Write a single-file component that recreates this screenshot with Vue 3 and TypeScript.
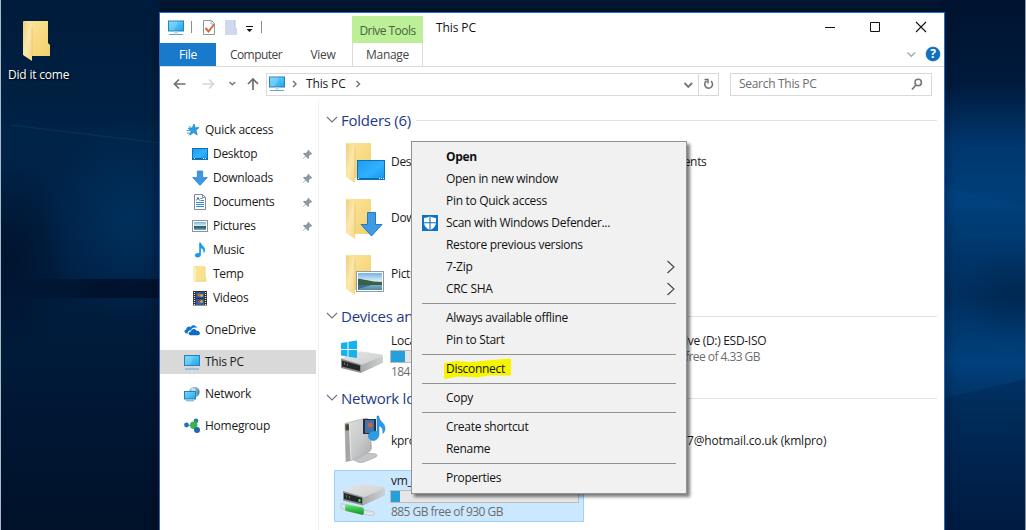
<script setup lang="ts">
interface NavItem { label: string; icon: string; pinned?: boolean; root?: boolean; active?: boolean; gap?: boolean }
interface MenuItem { label?: string; icon?: string; bold?: boolean; sub?: boolean; mark?: boolean; sep?: boolean }

const nav: NavItem[] = [
  { label: 'Quick access', icon: 'star', root: true },
  { label: 'Desktop', icon: 'desktop', pinned: true },
  { label: 'Downloads', icon: 'arrow', pinned: true },
  { label: 'Documents', icon: 'doc', pinned: true },
  { label: 'Pictures', icon: 'picture', pinned: true },
  { label: 'Music', icon: 'music' },
  { label: 'Temp', icon: 'minifolder' },
  { label: 'Videos', icon: 'film' },
  { label: 'OneDrive', icon: 'cloud', root: true, gap: true },
  { label: 'This PC', icon: 'pc', root: true, gap: true, active: true },
  { label: 'Network', icon: 'network', root: true, gap: true },
  { label: 'Homegroup', icon: 'homegroup', root: true, gap: true },
]

const menu: MenuItem[] = [
  { label: 'Open', bold: true },
  { label: 'Open in new window' },
  { label: 'Pin to Quick access' },
  { label: 'Scan with Windows Defender...', icon: 'shield' },
  { label: 'Restore previous versions' },
  { label: '7-Zip', sub: true },
  { label: 'CRC SHA', sub: true },
  { sep: true },
  { label: 'Always available offline' },
  { label: 'Pin to Start' },
  { sep: true },
  { label: 'Disconnect', mark: true },
  { sep: true },
  { label: 'Copy' },
  { sep: true },
  { label: 'Create shortcut' },
  { label: 'Rename' },
  { sep: true },
  { label: 'Properties' },
]

const folders = [
  { label: 'Desk', icon: 'f-desktop' },
  { label: 'Down', icon: 'f-downloads' },
  { label: 'Pictu', icon: 'f-pictures' },
]
</script>

<template>
  <svg class="defs" width="0" height="0">
    <defs>
      <linearGradient id="gFold" x1="0" y1="0" x2="1" y2="1">
        <stop offset="0" stop-color="#fce69c" /><stop offset="1" stop-color="#f2cf6c" />
      </linearGradient>
      <linearGradient id="gFlap" x1="0" y1="0" x2="1" y2="1">
        <stop offset="0" stop-color="#efcf77" /><stop offset=".5" stop-color="#fbe8ad" /><stop offset="1" stop-color="#f3d78a" />
      </linearGradient>
      <linearGradient id="gBlue" x1="0" y1="0" x2="1" y2="1">
        <stop offset="0" stop-color="#1f9cf0" /><stop offset=".55" stop-color="#31b0fc" /><stop offset="1" stop-color="#1295ee" />
      </linearGradient>
      <linearGradient id="gScreen" x1="0" y1="0" x2="1" y2="1">
        <stop offset="0" stop-color="#7fd4fa" /><stop offset=".5" stop-color="#4cc0f7" /><stop offset="1" stop-color="#1fa3ec" />
      </linearGradient>
      <linearGradient id="gMetal" x1="0" y1="0" x2="1" y2="1">
        <stop offset="0" stop-color="#e6e6e6" /><stop offset="1" stop-color="#cccdce" />
      </linearGradient>
      <linearGradient id="gSide" x1="0" y1="0" x2="1" y2="0">
        <stop offset="0" stop-color="#a9aaab" /><stop offset="1" stop-color="#cfd0d1" />
      </linearGradient>
      <linearGradient id="gNas" x1="0" y1="0" x2="1" y2="1">
        <stop offset="0" stop-color="#dfe0e1" /><stop offset=".55" stop-color="#c8c9ca" /><stop offset="1" stop-color="#a6a8aa" />
      </linearGradient>
      <linearGradient id="gGreen" x1="0" y1="0" x2="0" y2="1">
        <stop offset="0" stop-color="#8be893" /><stop offset=".35" stop-color="#45cb55" /><stop offset="1" stop-color="#168c29" />
      </linearGradient>
      <linearGradient id="gSky" x1="0" y1="0" x2="0" y2="1">
        <stop offset="0" stop-color="#71b8e8" /><stop offset=".5" stop-color="#dceef3" /><stop offset=".52" stop-color="#3c6b4b" /><stop offset=".7" stop-color="#2f6277" /><stop offset="1" stop-color="#78b4cc" />
      </linearGradient>
      <linearGradient id="gPhoto" x1="0" y1="0" x2="0" y2="1">
        <stop offset="0" stop-color="#6fb4e6" /><stop offset=".45" stop-color="#d5ebf5" /><stop offset=".6" stop-color="#8fbdd4" /><stop offset="1" stop-color="#4d86a8" />
      </linearGradient>
    </defs>
    <symbol id="folder" viewBox="0 0 40 42">
      <path d="M1 0h24v22l2 2v11H8z" fill="url(#gFold)" />
      <path d="M0 0l9 4v36l-9-6z" fill="url(#gFlap)" />
      <path d="M9 5v30" stroke="#e2bd5a" stroke-width=".6" />
    </symbol>
    <symbol id="pc" viewBox="0 0 16 16">
      <rect x=".5" y="1.5" width="15" height="10" fill="url(#gScreen)" stroke="#2881b8" />
      <path d="M1 2h9L6 11H1z" fill="#9de0fb" opacity=".3" />
      <path d="M6 12h4v2H6z" fill="#c7d9e4" /><path d="M1 15h14" stroke="#6ba4c6" />
    </symbol>
    <symbol id="star" viewBox="0 0 16 16">
      <path d="M10 2l1.200 3.800 3.800-.2-3 2.700 1.200 4.600-3.600-2.300L6 13l1.100-4.200L4.200 6.300l4-.4z" fill="#2ba0e3" stroke="#147cbb" stroke-width=".7" />
      <path d="M2.500 8.500h3.500M3 11h3M4.500 13l2-1.200M5 4.500l2 .8" stroke="#3aa5df" stroke-width="1" />
    </symbol>
    <symbol id="desktop" viewBox="0 0 16 16">
      <rect x=".5" y="2.5" width="15" height="11" fill="url(#gBlue)" stroke="#0b72bd" />
      <path d="M1 12.5h14" stroke="#0764ab" /><path d="M2 12.5h1M11 12.5h1M13 12.5h1" stroke="#fff" />
    </symbol>
    <symbol id="arrow" viewBox="0 0 16 16">
      <path d="M5.300 1h5.400v6.600h4.600L8 15.400.7 7.600h4.600z" fill="#3c98e2" stroke="#2a78bd" stroke-width=".7" />
    </symbol>
    <symbol id="doc" viewBox="0 0 16 16">
      <path d="M2.500 .5h8l3 3v12h-11z" fill="#fff" stroke="#808a90" />
      <path d="M10.500.5v3h3" fill="none" stroke="#808a90" />
      <path d="M4 8.500h8M4 10.500h8M4 12.500h8M8.500 6.500H12M8.500 4.500h2" stroke="#3388bd" />
      <path d="M4.500 6.500l1.500-3 1.500 3" stroke="#26709e" fill="none" />
    </symbol>
    <symbol id="picture" viewBox="0 0 16 16">
      <rect x=".5" y="2.500" width="15" height="11" fill="#fff" stroke="#8b9499" />
      <rect x="2" y="4" width="12" height="8" fill="url(#gSky)" />
    </symbol>
    <symbol id="music" viewBox="0 0 16 16">
      <path d="M7.200 .5h1.600c.3 3 4.600 4 4.200 8-.1 1.300-.7 2.300-1.500 3 .6-3-.7-4.600-2.600-5.200v6.500c0 1.700-1.500 2.700-3.300 2.700-1.700 0-2.800-.9-2.800-2.200 0-1.600 1.700-2.600 4.400-2.300z" fill="#169de9" />
    </symbol>
    <symbol id="minifolder" viewBox="0 0 16 16">
      <path d="M2 .8h11v10l1 1.200v3.200H2z" fill="#fbe28f" stroke="#e5c45f" stroke-width=".6" /><path d="M2 1l2 1v14l-2-1z" fill="#fff0ba" />
    </symbol>
    <symbol id="film" viewBox="0 0 16 16">
      <path d="M1 1h14v14.500H1z" fill="#2c2f33" />
      <path d="M2.500 2v13M13.500 2v13" stroke="#e8e8e8" stroke-width="1.300" stroke-dasharray="1 1" />
      <path d="M4 2h8v6H4z" fill="#2557a5" /><path d="M4 9h8v6H4z" fill="#2b5c9c" />
      <circle cx="7" cy="5" r="1.700" fill="#e15c34" /><circle cx="9.600" cy="5.500" r="1.500" fill="#cfb730" />
      <circle cx="7" cy="12" r="1.500" fill="#9a4c85" /><circle cx="9.500" cy="11.500" r="1.500" fill="#d5a43e" />
    </symbol>
    <symbol id="cloud" viewBox="0 0 16 16">
      <path d="M3 11.600C0 11.500-.5 8 2.200 7.400 2.300 4.700 5 3.600 6.800 5 8 2.600 12 2.500 13 6 9.800 4.600 7.300 6.500 7 8.200 4.800 8 3.400 9.600 4 11.600z" fill="#1376cf" />
      <path d="M6.200 13.200c-2.200-.3-2-3.600.7-3.700C7.300 6.600 11 6 12.500 8.700c3.800-.6 4.600 4.200 1.500 4.500z" fill="#0a6bc8" />
    </symbol>
    <symbol id="network" viewBox="0 0 16 16">
      <circle cx="10.500" cy="6" r="5.300" fill="#82abc5" /><path d="M7 3c3-3 5-1 4.500 1.500S7 7 7 3z" fill="#c8dce7" /><path d="M14 3c2 3 1 5-1 7z" fill="#4682ab" />
      <rect x=".5" y="5.500" width="11" height="7.500" fill="url(#gScreen)" stroke="#2980b5" /><path d="M2 14.800h8" stroke="#5e9ec5" />
    </symbol>
    <symbol id="homegroup" viewBox="0 0 16 16">
      <path d="M3 7l8 1 2-5M10 8l3 4" stroke="#4a9ac8" stroke-width="1.200" fill="none" />
      <circle cx="2.500" cy="7" r="2.400" fill="#236fbd" /><circle cx="12" cy="2.800" r="2.400" fill="#2f7f9f" /><circle cx="9.700" cy="7.300" r="3.700" fill="#39b54a" /><circle cx="13" cy="12" r="3" fill="#1f68b0" />
    </symbol>
    <symbol id="pin" viewBox="0 0 12 12">
      <path d="M6.800.8l4.400 4.400-.8.8-.9-.3-2 2.200.2 2-1 1L4 8.100.8 11.200.6 11l3-3.300L1.100 5.200l1-1 2.100.2 2-2-.3-.8z" fill="#8e999f" />
    </symbol>
    <symbol id="shield" viewBox="0 0 16 16">
      <rect width="16" height="16" fill="#0f72c4" />
      <path d="M8 1.200c2 1.300 4 1.700 6 1.700v4.600c0 3.400-2.300 6-6 7.500-3.700-1.500-6-4.100-6-7.500V2.900c2 0 4-.4 6-1.700z" fill="#fff" />
      <path d="M8 1v14M2 7.700h12" stroke="#0f72c4" stroke-width="1.100" />
    </symbol>
    <symbol id="f-desktop" viewBox="0 0 42 42">
      <use href="#folder" x="0" y="0" width="40" height="42" />
      <rect x="11.500" y="17.500" width="27" height="19" fill="url(#gBlue)" stroke="#0c6fba" />
      <path d="M12 35.500h26" stroke="#0b6cb6" /><path d="M12 35.500h1M33 35.500h1M35 35.500h1M37 35.500h1" stroke="#fff" />
    </symbol>
    <symbol id="f-downloads" viewBox="0 0 42 42">
      <use href="#folder" x="0" y="0" width="40" height="42" />
      <path d="M21.500 13.500h8v12h6.500L25.500 37 15 25.500h6.500z" fill="#3e9be4" stroke="#2878be" />
    </symbol>
    <symbol id="f-pictures" viewBox="0 0 42 42">
      <use href="#folder" x="0" y="0" width="40" height="42" />
      <rect x="10.500" y="16.500" width="27" height="20" fill="#fff" stroke="#929ba0" />
      <rect x="12" y="18" width="24" height="17" fill="url(#gPhoto)" />
      <path d="M12 24c3-1 5 1 8 1 5 1 9 2 16 2v3H12z" fill="#386248" /><path d="M12 30h14l-14 4z" fill="#2b5573" opacity=".7" />
    </symbol>
    <symbol id="drive" viewBox="0 0 46 24">
      <path d="M1 7.500L17 1.200q2.500-1 5-.6l20 3q1.600.6 0 1.600L21 14z" fill="url(#gMetal)" />
      <path d="M21 14l22-9.300v7L21 22z" fill="url(#gSide)" />
      <path d="M1 7.500L21 13.500V22L1 17z" fill="#8a8c8d" />
      <path d="M2 9.500l18 5v5.500L2 15.500z" fill="#242729" />
      <path d="M4.500 11.500v2.500M7.500 12.500v2.500" stroke="#666" />
    </symbol>
  </svg>

  <div class="desk">
    <svg class="wall" width="1026" height="530" viewBox="0 0 1026 530" preserveAspectRatio="none">
      <defs>
        <linearGradient id="wl" x1="0" y1="0" x2="0" y2="1">
          <stop offset="0" stop-color="#001b3c" /><stop offset=".22" stop-color="#002143" /><stop offset=".25" stop-color="#002448" /><stop offset=".5" stop-color="#001f42" /><stop offset=".65" stop-color="#001b3b" /><stop offset=".82" stop-color="#001632" /><stop offset="1" stop-color="#001129" />
        </linearGradient>
        <linearGradient id="wr" x1="0" y1="0" x2="0" y2="1">
          <stop offset="0" stop-color="#001330" /><stop offset=".16" stop-color="#001b3d" /><stop offset=".27" stop-color="#00366d" /><stop offset=".37" stop-color="#003f7a" /><stop offset=".48" stop-color="#003365" /><stop offset=".56" stop-color="#003060" /><stop offset=".68" stop-color="#00407c" /><stop offset=".76" stop-color="#003364" /><stop offset="1" stop-color="#001a3e" />
        </linearGradient>
        <radialGradient id="glow"><stop offset="0" stop-color="#003668" stop-opacity=".7" /><stop offset="1" stop-color="#003668" stop-opacity="0" /></radialGradient>
        <radialGradient id="dark"><stop offset="0" stop-color="#000c22" stop-opacity=".6" /><stop offset="1" stop-color="#000c22" stop-opacity="0" /></radialGradient>
        <linearGradient id="band"><stop offset=".1" stop-color="#000d24" stop-opacity="0" /><stop offset=".6" stop-color="#000d24" stop-opacity=".75" /></linearGradient>
        <linearGradient id="beam" x1="0" y1="0" x2="0" y2="1"><stop offset="0" stop-color="#01498a" stop-opacity=".3" /><stop offset="1" stop-color="#01498a" stop-opacity="0" /></linearGradient>
      </defs>
      <rect width="600" height="530" fill="url(#wl)" />
      <rect x="600" width="426" height="530" fill="url(#wr)" />
      <rect x="160" width="780" height="13" fill="#001632" />
      <ellipse cx="130" cy="220" rx="90" ry="100" fill="url(#glow)" />
      <ellipse cx="10" cy="260" rx="60" ry="100" fill="url(#dark)" />
      <rect x="0" y="279" width="160" height="19" fill="url(#band)" />
      <path d="M10 125L160 143" stroke="#1a4a70" stroke-width="1" opacity=".4" />
      <path d="M945 188L1026 206V290H945z" fill="url(#beam)" />
      <path d="M945 398L1026 379V530H945z" fill="#001f48" opacity=".3" />
      <ellipse cx="1015" cy="295" rx="60" ry="45" fill="url(#dark)" opacity=".4" />
      <rect width="1" height="530" fill="#a9bac8" /><rect x="1025" width="1" height="530" fill="#8997a8" />
    </svg>

    <div class="shortcut">
      <svg width="40" height="42"><use href="#folder" width="40" height="42" /></svg>
      <span>Did it come</span>
    </div>

    <section class="window">
      <header class="titlebar">
        <div class="qat">
          <svg width="100" height="20" viewBox="0 0 100 20">
            <use href="#pc" x="0" y="0" width="16" height="17" />
            <path d="M23.500 2v12M93.500 2v12" stroke="#8d8d8d" />
            <path d="M35.500 1.500h8l3 3v11h-11z" fill="#fff" stroke="#8d989f" /><path d="M43 2v3h3" fill="none" stroke="#a9b2b6" />
            <path d="M37.500 9l3 3.500 5.500-7" fill="none" stroke="#d8643a" stroke-width="2" />
            <path d="M57 1h10v9h2v6H57z" fill="#ced9ee" /><path d="M67 1v9h2" fill="none" stroke="#b7c3d9" />
            <path d="M78 7.500h7" stroke="#111" /><path d="M78.500 10h6l-3 3z" fill="#111" />
          </svg>
        </div>
        <div class="drive-tools">Drive Tools</div>
        <div class="title">This PC</div>
        <svg class="winbtns" width="106" height="14" viewBox="0 0 106 14">
          <path d="M0 7.500h10M45.500 2.500h9v9h-9z" fill="none" stroke="#111" />
          <path d="M91 2l10 10M101 2L91 12" stroke="#111" stroke-width="1.100" />
        </svg>
      </header>
      <nav class="tabs">
        <span class="tab file">File</span>
        <span class="tab computer">Computer</span>
        <span class="tab view">View</span>
        <span class="tab manage">Manage</span>
        <svg class="help" width="34" height="16" viewBox="0 0 34 16">
          <path d="M1.500 5.500l3.800 3.800L9.100 5.500" fill="none" stroke="#9ba9b3" stroke-width="1.300" />
          <circle cx="27" cy="7" r="7" fill="#0f70c2" stroke="#0860ab" stroke-width=".6" />
          <text x="27" y="11.300" text-anchor="middle" class="q">?</text>
        </svg>
      </nav>
      <div class="address">
        <svg class="arrows" width="88" height="20" viewBox="0 0 88 20">
          <path d="M12.500 10H1.500M6 5.500L1.500 10 6 14.500" fill="none" stroke="#6f6f6f" stroke-width="1.700" />
          <path d="M29.500 10H40.500M36 5.500l4.500 4.500L36 14.500" fill="none" stroke="#d4d4d4" stroke-width="1.500" />
          <path d="M56.500 8l2.800 2.800L62.100 8" fill="none" stroke="#777" stroke-width="1.500" />
          <path d="M80 16V5M75 10L80 5l5 5" fill="none" stroke="#6f6f6f" stroke-width="1.700" />
        </svg>
        <div class="path">
          <svg width="34" height="20" viewBox="0 0 34 20"><use href="#pc" x="2" y="1" width="16" height="17" /><path d="M26 7l3 3-3 3" fill="none" stroke="#777" stroke-width="1.500" /></svg>
          <span class="crumb">This PC</span>
          <svg width="8" height="20" viewBox="0 0 8 20"><path d="M1.500 7l3 3-3 3" fill="none" stroke="#777" stroke-width="1.500" /></svg>
          <svg class="drop" width="15" height="20" viewBox="0 0 15 20"><path d="M1.500 9L5.300 12.800 9.100 9" fill="none" stroke="#777" stroke-width="1.900" /></svg>
          <span class="refresh"><svg width="14" height="16" viewBox="0 0 14 16"><path d="M9 5.200a3.900 3.900 0 1 1-4.500-.2" fill="none" stroke="#6f6f6f" stroke-width="1.500" /><path d="M2.500 3.500H6v4" fill="none" stroke="#6f6f6f" stroke-width="1.500" /></svg></span>
        </div>
        <div class="search">
          <span>Search This PC</span>
          <svg width="14" height="14" viewBox="0 0 14 14"><circle cx="8.200" cy="5.500" r="3.200" fill="none" stroke="#777" stroke-width="1.600" /><path d="M6 8L2 12.500" stroke="#777" stroke-width="1.800" /></svg>
        </div>
      </div>

      <div class="body">
        <aside class="side">
          <div v-for="n in nav" :key="n.label" class="row" :class="{ root: n.root, gap: n.gap, active: n.active }">
            <svg width="16" height="16"><use :href="'#' + n.icon" width="16" height="16" /></svg>
            <span>{{ n.label }}</span>
            <svg v-if="n.pinned" class="pin" width="11" height="11"><use href="#pin" width="11" height="11" /></svg>
          </div>
        </aside>

        <main class="content">
          <h2><svg width="12" height="8" viewBox="0 0 12 8"><path d="M1 1l5 5 5-5" fill="none" stroke="#6b7482" stroke-width="1.100" /></svg><span>Folders (6)</span><i></i></h2>
          <div class="folders">
            <div v-for="(f, i) in folders" :key="f.label" class="line">
              <div class="tile"><svg class="ico" width="42" height="42"><use :href="'#' + f.icon" width="42" height="42" /></svg><span>{{ f.label }}</span></div>
              <div v-if="i === 0" class="far">Documents</div>
            </div>
          </div>

          <h2 class="h-dev"><svg width="12" height="8" viewBox="0 0 12 8"><path d="M1 1l5 5 5-5" fill="none" stroke="#6b7482" stroke-width="1.100" /></svg><span>Devices and</span><i></i></h2>
          <div class="line drives">
            <div class="tile drive">
              <svg class="ico" width="46" height="36" viewBox="0 0 46 36">
                <use href="#drive" x="0" y="13" width="46" height="24" />
                <path d="M1 5l6.500-1v7H1zM8.500 3.800L17 2.500V11H8.500zM1 12h6.500v6.500L1 17.600zM8.500 12H17v8l-8.500-1.300z" fill="#15b3ee" />
              </svg>
              <div class="info"><span>Local</span><div class="bar"><b class="c"></b></div><em>184 G</em></div>
            </div>
            <div class="far dvd"><span>Drive (D:) ESD-ISO</span><em>free of 4.33 GB</em></div>
          </div>

          <h2 class="h-net"><svg width="12" height="8" viewBox="0 0 12 8"><path d="M1 1l5 5 5-5" fill="none" stroke="#6b7482" stroke-width="1.100" /></svg><span>Network loc</span><i></i></h2>
          <div class="line media">
            <div class="tile">
              <svg class="ico" width="44" height="50" viewBox="0 0 44 50">
                <path d="M12 44l14-7 8 1q2 1 0 3l-12 5q-3 1-6 0z" fill="#c3c5c6" stroke="#8f9192" stroke-width=".5" />
                <path d="M3 7.500L24 2q2.500 0 3 2.500l2.500 27q0 3-3 4.500L11 44l-7 1.500z" fill="url(#gNas)" stroke="#a1a3a5" stroke-width=".6" />
                <path d="M3 7.500l4-.5 2 37.500-5 1z" fill="#a3a5a7" /><path d="M3.300 8.500l3.700-.3.300 6-3.700.3z" fill="#45482f" />
                <path d="M7.300 7L9 44" stroke="#f1f1f1" stroke-width=".8" />
                <rect x="21" y="3" width="13" height="15" fill="#2a2e37" /><rect x="23" y="4" width="9" height="13" fill="#3f74af" /><circle cx="28" cy="9" r="2.500" fill="#c4683e" />
                <path d="M35 0h1.800c.5 6 6.700 7 6.200 13-.2 2-1 3.500-2 4.500.2-4-1-6.500-4-8V18c0 4-3 6.500-5.500 6.500-3 0-5-1.700-5-4.500 0-3.500 3.500-6 8.500-4.500z" fill="#2c9be8" stroke="#1878c4" stroke-width=".5" />
              </svg>
              <span>kpro</span>
            </div>
            <div class="far mail">7@hotmail.co.uk (kmlpro)</div>
          </div>
          <div class="line">
            <div class="tile selected">
              <svg class="ico" width="46" height="34" viewBox="0 0 46 34">
                <use href="#drive" x="2" y="4.500" width="46" height="24" />
                <path d="M19.500 20v3" stroke="#40df4a" stroke-width="2" />
                <path d="M1 24.500l5 1v6l-5-2.500zM23 31l7 1 4 1v3l-4 .5-7-1.500z" fill="#dfe5e6" stroke="#a1adb0" stroke-width=".5" />
                <path d="M6 25l17 3.500q2 3 0 7.500L6 32q-2-3.500 0-7z" fill="url(#gGreen)" />
              </svg>
              <div class="info"><span>vm_s</span><div class="bar"><b class="v"></b></div><em>885 GB free of 930 GB</em></div>
            </div>
          </div>
        </main>
      </div>
    </section>

    <div class="menu">
      <template v-for="(m, i) in menu" :key="i">
        <div v-if="m.sep" class="sep"></div>
        <div v-else class="item" :class="{ bold: m.bold }">
          <svg class="mi" width="16" height="16"><use v-if="m.icon" :href="'#' + m.icon" width="16" height="16" /></svg>
          <span class="lbl">
            <svg v-if="m.mark" class="hl" width="70" height="22" viewBox="0 0 70 22"><path d="M2 5L14 3l14 1L69 .5v17l-22 0-12 2-18-1-15 2.500z" fill="#f6f500" /></svg>
            <span>{{ m.label }}</span>
          </span>
          <svg v-if="m.sub" class="sub" width="10" height="14" viewBox="0 0 10 14"><path d="M1.500 1l6.500 6-6.500 6" fill="none" stroke="#4a4038" stroke-width="1.100" /></svg>
        </div>
      </template>
    </div>
  </div>
</template>

<style>
body { margin: 0; overflow: hidden; }
</style>

<style scoped>
.defs { position: absolute; }
svg { display: block; flex: none; overflow: visible; }
.desk { position: relative; width: 1026px; height: 530px; overflow: hidden; font: 12px/16px "Open Sans", "Noto Sans", sans-serif; letter-spacing: -0.3px; color: #1a1a1a; white-space: nowrap; }
.wall { position: absolute; left: 0; top: 0; }
.shortcut { position: absolute; left: 0; top: 21px; width: 78px; display: flex; flex-direction: column; color: #fff; letter-spacing: -0.2px; text-shadow: 1px 1px 2px #000; }
.shortcut svg { margin-left: 23px; }
.shortcut span { margin: 4px 0 0 8px; }
.window { position: absolute; box-sizing: border-box; left: 159px; top: 12px; width: 786px; height: 519px; border: 1px solid #1b6fc2; background: #fff; display: flex; flex-direction: column; box-shadow: 0 2px 10px rgba(0, 0, 10, .5); }
.titlebar { height: 30px; display: flex; }
.qat { width: 184px; padding: 6px 0 0 8px; }
.drive-tools { width: 71px; height: 27px; margin-top: 3px; background: #bdee98; color: #45663c; text-align: center; line-height: 29px; letter-spacing: -0.55px; }
.title { margin-left: 13px; line-height: 30px; color: #111; letter-spacing: -0.1px; }
.winbtns { margin: 7px 13px 0 auto; }
.tabs { height: 23px; display: flex; border-bottom: 1px solid #dadbdc; line-height: 24px; color: #444; }
.tab { text-align: center; }
.file { width: 56px; background: #1979ca; color: #fff; }
.computer { width: 80px; letter-spacing: -0.55px; }
.view { width: 54px; margin-right: 2px; }
.manage { width: 69px; border: solid #dcdcdc; border-width: 0 1px; }
.help { margin: 4px 4px 0 auto; }
.q { font: bold 12px "Open Sans", sans-serif; fill: #fff; }
.address { height: 34px; display: flex; align-items: center; box-sizing: border-box; }
.arrows { margin-left: 13px; }
.path { box-sizing: border-box; height: 23px; width: 453px; margin-left: 5px; border: 1px solid #d9d9d9; display: flex; align-items: center; }
.crumb { margin: 0 9px 0 5px; letter-spacing: -0.15px; }
.drop { margin-left: auto; }
.refresh { width: 19px; height: 21px; border-left: 1px solid #d9d9d9; display: flex; align-items: center; justify-content: center; }
.search { box-sizing: border-box; width: 202px; height: 23px; margin-left: 11px; padding: 0 7px 0 8px; border: 1px solid #d9d9d9; display: flex; align-items: center; justify-content: space-between; color: #6d6d6d; }
.search span { letter-spacing: -0.3px; }
.body { flex: 1; display: flex; min-height: 0; }
.side { box-sizing: border-box; width: 159px; padding-top: 17px; border-right: 1px solid #f2f2f2; }
.row { box-sizing: border-box; width: 156px; height: 24px; padding-left: 32px; display: flex; align-items: center; }
.row span { margin-left: 5px; }
.row.root { padding-left: 24px; letter-spacing: -0.25px; }
.row.gap { margin-top: 8px; }
.row.active { background: #d9d9d9; }
.pin { margin: 0 3px 0 auto; }
.content { flex: 1; padding-left: 7px; }
h2 { margin: 0; height: 20px; padding-top: 9px; display: flex; align-items: center; font-size: 15px; line-height: 20px; font-weight: 400; letter-spacing: -0.25px; color: #1e3a86; }
h2 span { margin: 0 5px 0 3px; }
h2 i { flex: 1; height: 1px; margin-right: 7px; background: #e2e2e2; }
.line { display: flex; margin-left: 8px; height: 56px; }
.folders { padding-top: 4px; }
.tile { box-sizing: border-box; width: 250px; height: 56px; display: flex; align-items: center; }
.tile > span { margin-left: 3px; }
.folders .ico { margin-top: 3px; }
.ico { margin-left: 12px; }
.far { align-self: center; margin-left: 61px; }
.far span, .far em { display: block; }
em { font-style: normal; color: #6d6d6d; letter-spacing: -0.55px; }
.h-dev { padding-top: 4px; }
.drives { height: 60px; padding-top: 2px; }
.drive .ico { margin-left: 6px; }
.selected .ico { margin-left: 5px; }
.info { margin-left: 4px; width: 189px; }
.info span, .info em { display: block; line-height: 16px; padding-left: 1px; }
.bar { box-sizing: border-box; height: 13px; margin: 1px 0; border: 1px solid #bcbcbc; background: #e6e6e6; }
.bar b { display: block; height: 11px; background: #26a0da; }
.bar .c { width: 14px; }
.bar .v { width: 9px; }
.dvd { margin-left: 88px; margin-bottom: 18px; }
.dvd em { margin-left: 13px; }
.h-net { padding-top: 0; }
.media { height: 62px; padding-top: 3px; box-sizing: border-box; }
.media .tile { height: 59px; }
.media .ico { margin-left: 8px; }
.media .tile > span { margin-left: 5px; }
.mail { margin-left: 103px; letter-spacing: -0.17px; }
.selected { height: 52px; background: #cce8ff; border: 1px solid #99d1ff; }
.menu { position: absolute; box-sizing: border-box; left: 411px; top: 141px; width: 276px; height: 353px; padding: 4px 0; border: 1px solid #8f9193; background: #f1f1f1; box-shadow: 3px 3px 3px rgba(0, 0, 0, .5); color: #111; }
.item { height: 22px; display: flex; align-items: center; }
.bold { font-weight: 700; }
.mi { margin: 0 8px 0 10px; }
.lbl { position: relative; }
.lbl > span { position: relative; }
.hl { position: absolute; left: -4px; top: -3px; }
.sub { margin: 0 10px 0 auto; }
.sep { height: 7px; box-sizing: border-box; margin: 0 10px; border-top: 3px solid transparent; background: linear-gradient(#919191, #919191) 0 0 / 100% 1px no-repeat; }
</style>
